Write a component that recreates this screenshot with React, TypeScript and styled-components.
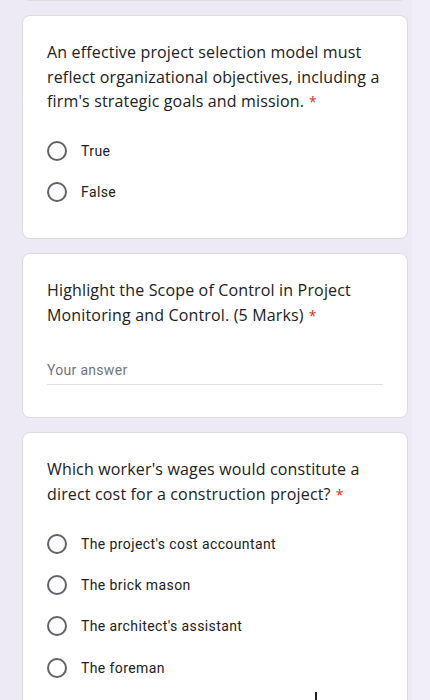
import React from "react";
import styled, { createGlobalStyle } from "styled-components";

const GlobalStyle = createGlobalStyle`
  html, body {
    margin: 0;
    padding: 0;
    background: #edeaf6;
  }
  * {
    box-sizing: border-box;
  }
`;

const Page = styled.div`
  display: flex;
  min-height: 700px;
  overflow: hidden;
`;

const Main = styled.main`
  flex: 1;
  display: flex;
  flex-direction: column;
  gap: 14px;
  padding: 0 4px 0 22px;
`;

const ScrollTrack = styled.div`
  width: 18px;
  flex: none;
  background: #f1eef9;
`;

const Card = styled.section`
  position: relative;
  background: #fff;
  border: 1px solid #dadce0;
  border-radius: 8px;
  padding: 24px 24px 25px;
`;

const PrevCard = styled(Card)`
  height: 32px;
  margin-top: -31px;
  padding: 0;
`;

// the red required mark is drawn after the question text
const Question = styled.div`
  margin-right: -6px;
  font-family: "Open Sans", Roboto, sans-serif;
  font-size: 16px;
  line-height: 24.5px;
  letter-spacing: 0.16px;
  color: #202124;

  &::after {
    content: "*";
    margin-left: 5px;
    color: #d93025;
    font-size: 14px;
  }
`;

const Options = styled.div`
  display: flex;
  flex-direction: column;
  margin-top: 16px;
`;

const OptionRow = styled.label`
  display: flex;
  align-items: center;
  gap: 14px;
  height: 41.3px;
  font-family: Roboto, "Noto Sans", sans-serif;
  font-size: 14px;
  letter-spacing: 0.4px;
  color: #202124;
`;

const RadioCircle = styled.span`
  width: 20px;
  height: 20px;
  flex: none;
  border: 2px solid #5f6368;
  border-radius: 50%;
`;

const AnswerField = styled.div`
  margin-top: 32px;
  margin-bottom: 7px;
  padding-bottom: 4px;
  border-bottom: 1px solid #e0e0e0;
  font-family: Roboto, "Noto Sans", sans-serif;
  font-size: 14px;
  line-height: 20px;
  letter-spacing: 0.3px;
  color: #70757a;
`;

const Caret = styled.span`
  position: absolute;
  left: 292px;
  top: 259px;
  width: 2px;
  height: 18px;
  background: #202124;
`;

type McqProps = {
  question: string;
  options: string[];
  children?: React.ReactNode;
};

const McqCard = ({ question, options, children }: McqProps) => (
  <Card>
    <Question>{question}</Question>
    <Options>
      {options.map((option) => (
        <OptionRow key={option}>
          <RadioCircle />
          {option}
        </OptionRow>
      ))}
    </Options>
    {children}
  </Card>
);

export default function App() {
  return (
    <>
      <GlobalStyle />
      <Page>
        <Main>
          <PrevCard />
          <McqCard
            question="An effective project selection model must reflect organizational objectives, including a firm's strategic goals and mission."
            options={["True", "False"]}
          />
          <Card>
            <Question>
              Highlight the Scope of Control in Project Monitoring and Control. (5 Marks)
            </Question>
            <AnswerField>Your answer</AnswerField>
          </Card>
          <McqCard
            question="Which worker's wages would constitute a direct cost for a construction project?"
            options={[
              "The project's cost accountant",
              "The brick mason",
              "The architect's assistant",
              "The foreman",
            ]}
          >
            <Caret />
          </McqCard>
        </Main>
        <ScrollTrack />
      </Page>
    </>
  );
}
